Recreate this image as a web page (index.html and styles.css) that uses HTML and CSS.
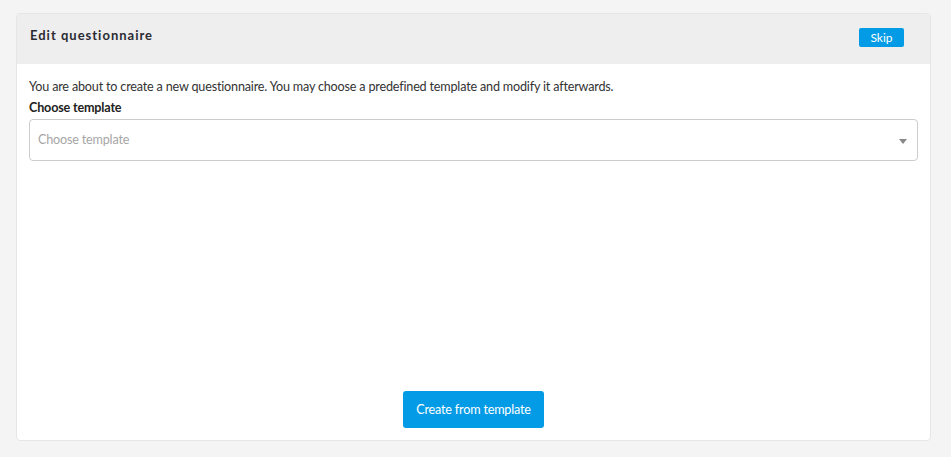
FILE: index.html
```html
<!DOCTYPE html>
<html>
<head>
<meta charset="utf-8">
<link rel="stylesheet" href="styles.css">
</head>
<body>
<div class="card">
  <div class="card-header">
    <h1 class="title">Edit questionnaire</h1>
    <button class="btn btn-sm">Skip</button>
  </div>
  <div class="card-body">
    <p class="intro">You are about to create a new questionnaire. You may choose a predefined template and modify it afterwards.</p>
    <label class="label">Choose template</label>
    <div class="select">
      <span class="placeholder">Choose template</span>
      <span class="caret"></span>
    </div>
    <div class="actions">
      <button class="btn btn-lg">Create from template</button>
    </div>
  </div>
</div>
</body>
</html>
```
FILE: styles.css
```css
html, body {
  margin: 0;
  padding: 0;
  background: #f4f4f4;
  font-family: Lato, "Noto Sans", sans-serif;
  color: #333;
}
body {
  padding: 13px 20px 16px 16px;
}
.card {
  height: 428px;
  box-sizing: border-box;
  background: #fff;
  border: 1px solid #e6e6e6;
  border-radius: 4px;
  display: flex;
  flex-direction: column;
  overflow: hidden;
}
.card-header {
  height: 50px;
  flex: none;
  background: #eeeeee;
  display: flex;
  align-items: center;
  justify-content: space-between;
  padding: 0 26px 0 13px;
  box-sizing: border-box;
}
.title {
  margin: 0 0 8px 0;
  font-size: 13px;
  font-weight: 700;
  letter-spacing: 1px;
  color: #2b2b33;
}
.btn {
  font-family: inherit;
  background: #039be5;
  color: #fff;
  border: none;
  cursor: pointer;
}
.btn-sm {
  width: 45px;
  height: 19px;
  font-size: 12px;
  border-radius: 2px;
  padding: 0;
  margin-bottom: 4px;
  line-height: 19px;
}
.card-body {
  flex: 1;
  display: flex;
  flex-direction: column;
  padding: 13px 12px 12px 12px;
}
.intro {
  margin: 0;
  font-size: 12.6px;
  letter-spacing: -0.18px;
  line-height: 20px;
  color: #333;
}
.label {
  font-size: 12.6px;
  letter-spacing: -0.18px;
  font-weight: 700;
  line-height: 21px;
  color: #222;
}
.select {
  margin-top: 1px;
  height: 42px;
  box-sizing: border-box;
  border: 1px solid #cccccc;
  border-radius: 4px;
  display: flex;
  align-items: center;
  justify-content: space-between;
  padding: 0 10px 2px 8px;
}
.placeholder {
  font-size: 12.6px;
  letter-spacing: -0.18px;
  color: #a6a6a6;
}
.caret {
  width: 0;
  height: 0;
  border-left: 4.5px solid transparent;
  border-right: 4.5px solid transparent;
  border-top: 5px solid #888;
  margin-top: 4px;
}
.actions {
  margin-top: auto;
  display: flex;
  justify-content: center;
}
.btn-lg {
  width: 141px;
  height: 37px;
  font-size: 12.6px;
  letter-spacing: -0.18px;
  border-radius: 3px;
  padding: 0;
}
```
